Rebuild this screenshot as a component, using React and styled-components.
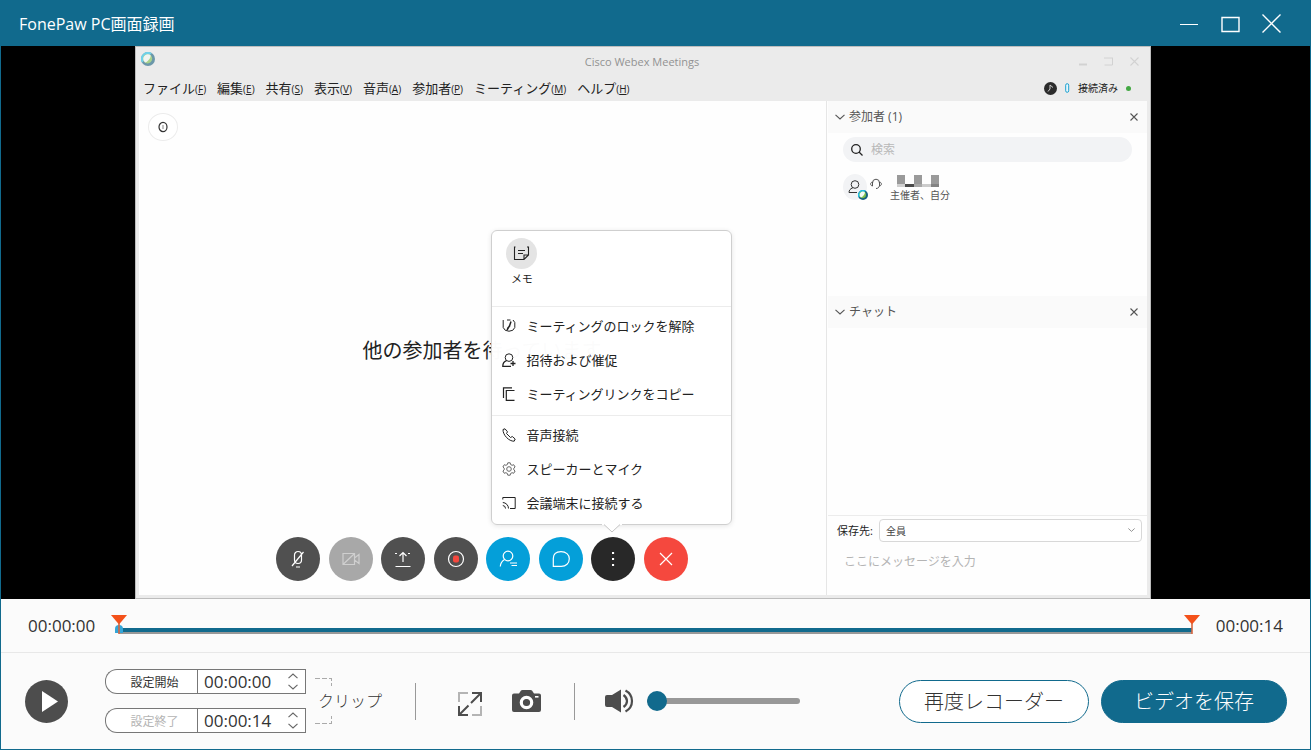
import { useState } from 'react'
import styled, { createGlobalStyle } from 'styled-components'

const menus = [
  ['ファイル', 'F'],
  ['編集', 'E'],
  ['共有', 'S'],
  ['表示', 'V'],
  ['音声', 'A'],
  ['参加者', 'P'],
  ['ミーティング', 'M'],
  ['ヘルプ', 'H'],
]

const mosaic = ['#9a9a9a', '#fefefe', '#9a9a9a', '#fefefe', '#9a9a9a', '#d0d0d0', '#4a4a4a', '#a8a8a8', '#cccccc', '#838383']

const WebexLogo = ({ size, faded }) => (
  <svg width={size} height={size} viewBox="0 0 14 14" opacity={faded ? 0.6 : 1} aria-hidden="true">
    <circle cx="7" cy="7" r="7" fill="#17607f" />
    <path d="M1 10.6A7 7 0 0 1 10.8 1.1L8 4 4 8Z" fill="#1fc0e8" />
    <circle cx="6.6" cy="6.8" r="4.6" fill="#7cc04b" />
    <path d="M2.6 8.6A4.6 4.6 0 0 1 9.6 3.2C10 6 7 9.6 4 10.6Z" fill="#f4fbf6" />
  </svg>
)

const Chevron = ({ width = 10 }) => (
  <svg width={width} height="6" viewBox="0 0 10 6" fill="none" stroke="currentColor" strokeWidth="1.1" aria-hidden="true">
    <path d="M.5 .8 5 5 9.500 .8" />
  </svg>
)

const Cross = ({ size = 8, stroke = 1.1 }) => (
  <svg width={size} height={size} fill="none" stroke="currentColor" strokeWidth={stroke} aria-hidden="true">
    <path d={`M.5 .5 ${size - 0.5} ${size - 0.5}M${size - 0.5} .5 .5 ${size - 0.5}`} />
  </svg>
)

const Line = ({ size = 20, children }) => (
  <svg width={size} height={size} viewBox="0 0 20 20" fill="none" stroke="currentColor" strokeWidth="1.2" aria-hidden="true">
    {children}
  </svg>
)

const Small = ({ children }) => (
  <svg width="14" height="14" viewBox="0 0 14 14" fill="none" stroke="#222" strokeWidth="1" aria-hidden="true">
    {children}
  </svg>
)

const callButtons = [
  { label: 'ミュート', color: '#505050', icon: <Line><path d="M6.500 6a3.500 3.500 0 0 1 7 0v5a3.500 3.500 0 0 1-7 0ZM15.500 3 4 17M8 18h4" /></Line> },
  { label: 'ビデオ', color: '#a8a8a8', line: '#cfcfcf', icon: <Line><path d="M2 4.500h11.500v11H2ZM13.500 9 18 5.500v9L13.500 11M2.500 15 13 5" /></Line> },
  { label: '共有', color: '#505050', icon: <Line><path d="M2.500 17.500h15M10 13V3.500M6.500 7 10 3.500 13.500 7" /><path d="M2 4.500h3M15 4.500h3" strokeDasharray="2 2" /></Line> },
  { label: '録画', color: '#505050', icon: <Line><circle cx="10" cy="10" r="7.500" /><rect x="7" y="6.500" width="6" height="7" rx="2" fill="#f5483e" stroke="none" /></Line> },
  { label: '参加者', color: '#049fd9', icon: <Line><circle cx="10" cy="7" r="4.800" /><path d="M6.500 10.500C4 12 2.500 14 2.300 17.500M12 14h7M13.500 16.500H19" /></Line> },
  { label: 'チャット', color: '#049fd9', icon: <Line><path d="M2.300 17.300V9.500C2.300 5 5.500 2.600 10 2.600c5 0 8.300 3 8.300 7.200 0 4.500-3.300 7.500-8 7.500Z" /></Line> },
  { label: 'その他', color: '#282828', menu: true, icon: <Line><path d="M10 4h.1M10 10h.1M10 16h.1" strokeWidth="2" strokeLinecap="square" /></Line> },
  { label: '退出', color: '#f5483e', icon: <Line><path d="M4 4 16 16M16 4 4 16" /></Line> },
]

const meetingItems = [
  ['ミーティングのロックを解除', <Small><path d="M1.200 1v7.500a6 5 0 0 0 11.600 0V3.500L11 1M5 1h3.500" /><path d="M9 2.500 7.500 7 5 11M5.500 9.500 8 6.500" strokeWidth="1.500" /></Small>],
  ['招待および催促', <Small><circle cx="7" cy="4.600" r="3.800" /><path d="M4.500 7.700C2 8.500.8 10.500.8 13.300H9M8.500 10.500h5M11 8v5" strokeWidth="1.300" /></Small>],
  ['ミーティングリンクをコピー', <Small><path d="M1.500 11V.8H10M12.500 3.500H4.300v9.900h8.200" strokeWidth="1.200" /></Small>],
]

const deviceItems = [
  ['音声接続', <Small><path d="M1 1.500 3 .8l2.500 3-1 1.700 4 4 1.800-1L13.200 11l-1 2.200C7 13.500.8 7 1 1.500Z" /></Small>],
  ['スピーカーとマイク', <Small><circle cx="7" cy="7" r="2.300" stroke="#666" /><path d="m5.800.8-.4 1.700-1.500.8L2.300 2.700.9 5l1.300 1.200v1.600L.9 9l1.400 2.300 1.600-.6 1.500.8.4 1.700h2.400l.4-1.700 1.500-.8 1.600.6L13.100 9l-1.300-1.200V6.200L13.100 5l-1.400-2.300-1.600.6-1.500-.8L8.200.8Z" stroke="#666" /></Small>],
  ['会議端末に接続する', <Small><path d="M.8 3.500V1.500h12.400v11H8M.8 6.500a6 6 0 0 1 5.700 6M.8 9.500a3 3 0 0 1 2.700 3" /></Small>],
]

const MoreMenu = () => (
  <Popup role="menu">
    <MemoSection>
      <Memo type="button">
        <MemoCircle>
          <svg width="17" height="17" viewBox="0 0 17 17" fill="none" stroke="#222" strokeWidth="1.100" aria-hidden="true">
            <path d="M2.500 2H1.500v12.500h9.500l4.500-4.500V2h-1.500M11 14.500V10h4.500M5 5.500h7M5 8.500h5" />
          </svg>
        </MemoCircle>
        メモ
      </Memo>
    </MemoSection>
    {[meetingItems, deviceItems].map((items, i) => (
      <MenuSection key={i}>
        {items.map(([text, icon]) => (
          <MenuItem key={text} type="button" role="menuitem">
            {icon}
            {text}
          </MenuItem>
        ))}
      </MenuSection>
    ))}
    <Arrow viewBox="0 0 20 9" aria-hidden="true">
      <path d="M0 0H20V1H17.500L10 8 2.500 1H0Z" fill="#fff" />
      <path d="M2 .5 10 8 18 .5" fill="none" stroke="#c4c4c4" />
    </Arrow>
  </Popup>
)

const TimeField = ({ label, value, onChange, disabled }) => (
  <ClipRow>
    <SetButton type="button" disabled={disabled}>{label}</SetButton>
    <SpinBox>
      <TimeInput aria-label={label} value={value} onChange={(e) => onChange(e.target.value)} />
      <Spinner>
        <SpinButton type="button" aria-label={`${label} +`} $up>
          <Chevron width={12} />
        </SpinButton>
        <SpinButton type="button" aria-label={`${label} -`}>
          <Chevron width={12} />
        </SpinButton>
      </Spinner>
    </SpinBox>
  </ClipRow>
)

const Marker = () => (
  <svg width="16" height="19" viewBox="0 0 16 19" aria-hidden="true">
    <path d="M0 0H16L8 9.500Z" fill="#f4511a" />
    <path d="M8 8V19" stroke="#d9663f" strokeWidth="1.600" />
  </svg>
)

const App = () => {
  const [start, setStart] = useState('00:00:00')
  const [end, setEnd] = useState('00:00:14')
  const [position, setPosition] = useState(0)
  const [volume, setVolume] = useState(0)

  return (
    <Window>
      <GlobalStyle />
      <TitleBar>
        <Title>FonePaw PC画面録画</Title>
        <WindowButtons>
          <PlainButton type="button" aria-label="最小化">
            <svg width="19" height="19" fill="none" stroke="#fff"><path d="M0 10.500H18" /></svg>
          </PlainButton>
          <PlainButton type="button" aria-label="最大化">
            <svg width="19" height="19" fill="none" stroke="#fff" strokeWidth="1.400"><path d="M1 3.500H18V17.500H1Z" /></svg>
          </PlainButton>
          <PlainButton type="button" aria-label="閉じる">
            <Cross size={19} stroke={1.4} />
          </PlainButton>
        </WindowButtons>
      </TitleBar>

      <Stage>
        <Meeting>
          <MeetingTitle>
            <WebexLogo size={14} faded />
            <MeetingName>Cisco Webex Meetings</MeetingName>
            <MeetingButtons>
              <svg width="9" height="9"><path d="M0 7.500H8" stroke="#d2d2d2" strokeWidth="2" /></svg>
              <svg width="10" height="9" fill="none" stroke="#d2d2d2"><path d="M0 1H9M8.500 1V8H.5" /></svg>
              <Cross size={9} />
            </MeetingButtons>
          </MeetingTitle>
          <MenuBar>
            {menus.map(([text, key]) => (
              <MenuEntry key={key} type="button">
                {text}
                <Accel>(<u>{key}</u>)</Accel>
              </MenuEntry>
            ))}
            <Connection>
              <svg width="13" height="13" viewBox="0 0 13 13" aria-hidden="true">
                <circle cx="6.500" cy="6.500" r="6.500" fill="#2b2b2b" />
                <path d="M4 9.500 6 7V3l3 2.500" fill="none" stroke="#ccc" />
              </svg>
              <svg width="5" height="10" viewBox="0 0 5 10" aria-hidden="true">
                <rect x=".7" y=".7" width="3" height="8.600" rx="1.500" fill="#e8f8fe" stroke="#1ba0cf" />
              </svg>
              接続済み
              <GreenDot />
            </Connection>
          </MenuBar>

          <MeetingBody>
            <Waiting>
              <InfoButton type="button" aria-label="情報">
                <svg width="10" height="12" fill="none" stroke="#333" strokeWidth="1.200"><ellipse cx="5" cy="6" rx="4" ry="4.600" /><path d="M5 4V8" strokeWidth=".6" /></svg>
              </InfoButton>
              <WaitingText>他の参加者を待っています</WaitingText>
              <CallBar>
                {callButtons.map((b) => (
                  <CallSlot key={b.label}>
                    <CallButton type="button" aria-label={b.label} $color={b.color} $line={b.line}>
                      {b.icon}
                    </CallButton>
                    {b.menu && <MoreMenu />}
                  </CallSlot>
                ))}
              </CallBar>
            </Waiting>

            <Side>
              <PanelHead>
                <Chevron />
                <PanelName>参加者 (1)</PanelName>
                <PlainButton type="button" aria-label="参加者を閉じる"><Cross /></PlainButton>
              </PanelHead>
              <Participants>
                <Search>
                  <svg width="12" height="12" fill="none" stroke="#222" strokeWidth="1.300" aria-hidden="true"><circle cx="5" cy="5" r="4.300" /><path d="M8 8 11.500 11.500" /></svg>
                  <SearchInput aria-label="検索" placeholder="検索" />
                </Search>
                <Person>
                  <Avatar>
                    <svg width="14" height="14" viewBox="0 0 14 14" fill="none" stroke="#333" aria-hidden="true"><circle cx="7" cy="4.500" r="3.800" /><path d="M4.800 7.800C2 8.800 1 10.500 1 12.500H9" /></svg>
                    <AvatarBadge><WebexLogo size={10} /></AvatarBadge>
                  </Avatar>
                  <svg width="12" height="12" viewBox="0 0 12 12" fill="none" stroke="#555" aria-hidden="true"><path d="M2.500 7.500V5a3.500 3.800 0 0 1 7 0v2.500c-.5 2-1.500 3-3.500 3" /><path d="M2.500 4C0 4.500 0 7.500 2.500 8ZM9.500 4C12 4.500 12 7.500 9.500 8Z" /></svg>
                  <PersonText>
                    <Mosaic>
                      {mosaic.map((c, i) => <Pixel key={i} $color={c} />)}
                    </Mosaic>
                    主催者、自分
                  </PersonText>
                </Person>
              </Participants>
              <PanelHead>
                <Chevron />
                <PanelName>チャット</PanelName>
                <PlainButton type="button" aria-label="チャットを閉じる"><Cross /></PlainButton>
              </PanelHead>
              <ChatLog />
              <ChatForm>
                <SendRow>
                  <label htmlFor="send-to">保存先:</label>
                  <SelectBox>
                    <SendSelect id="send-to"><option>全員</option></SendSelect>
                    <Chevron width={7} />
                  </SelectBox>
                </SendRow>
                <Message aria-label="メッセージ" rows="1" placeholder="ここにメッセージを入力" />
              </ChatForm>
            </Side>
          </MeetingBody>
        </Meeting>
      </Stage>

      <Timeline>
        <span>00:00:00</span>
        <Track>
          <Seek type="range" aria-label="再生位置" min="0" max="14" value={position} onChange={(e) => setPosition(e.target.value)} />
          <MarkerSlot><Marker /></MarkerSlot>
          <MarkerSlot $end><Marker /></MarkerSlot>
        </Track>
        <span>00:00:14</span>
      </Timeline>

      <Controls>
        <PlainButton type="button" aria-label="再生">
          <svg width="43" height="43" viewBox="0 0 43 43"><circle cx="21.500" cy="21.500" r="21.500" fill="#4d4d4d" /><path d="M17 11V32L33 21.500Z" fill="#fff" /></svg>
        </PlainButton>
        <ClipTimes>
          <TimeField label="設定開始" value={start} onChange={setStart} />
          <TimeField label="設定終了" value={end} onChange={setEnd} disabled />
        </ClipTimes>
        <Clip>
          <svg width="18" height="10" fill="none" stroke="#aaa"><path d="M0 1.500H17" strokeDasharray="5 2" /><path d="M16.500 1V10" strokeDasharray="3 2" /></svg>
          <span>クリップ</span>
          <svg width="18" height="10" fill="none" stroke="#aaa"><path d="M0 8.500H17" strokeDasharray="5 2" /><path d="M16.500 9V0" strokeDasharray="3 2" /></svg>
        </Clip>
        <Divider />
        <Tools>
          <PlainButton type="button" aria-label="全画面">
            <svg width="24" height="30" viewBox="0 -6 24 30" fill="none" strokeWidth="2">
              <path d="M1 10V1H10M23 14V23H14" stroke="#b4b4b4" />
              <path d="M14 1H23V10M1 14V23H10M22.500 1.500 13 11M1.500 22.500 10.500 13.500" stroke="#4d4d4d" />
            </svg>
          </PlainButton>
          <PlainButton type="button" aria-label="スナップショット">
            <svg width="29" height="24" viewBox="0 0 29 24">
              <path d="M2 4.500H7L9 1.500Q9.500 1 10.500 1H18.500Q19.500 1 20 1.500L22 4.500H27Q29 4.500 29 6.500V21Q29 23 27 23H2Q0 23 0 21V6.500Q0 4.500 2 4.500Z" fill="#4d4d4d" />
              <circle cx="14.500" cy="13.500" r="5.200" fill="#4d4d4d" stroke="#fff" strokeWidth="3.200" />
              <circle cx="14.500" cy="13.500" r="3" fill="#4d4d4d" />
              <path d="M23 7.800H26.500" stroke="#fff" strokeWidth="1.600" />
            </svg>
          </PlainButton>
        </Tools>
        <Divider />
        <Sound>
          <PlainButton type="button" aria-label="消音">
            <svg width="29" height="24" viewBox="0 0 29 24" fill="none" stroke="#4d4d4d" strokeWidth="2.200">
              <path d="M2 6H7L16 .5V23.500L7 18H2Q0 18 0 16V8Q0 6 2 6Z" fill="#4d4d4d" stroke="none" />
              <path d="M18.500 6Q22 8.500 22 12T18.500 18M20.500 1.500Q27 5 27 12T20.500 22.500" />
            </svg>
          </PlainButton>
          <Volume type="range" aria-label="音量" value={volume} onChange={(e) => setVolume(e.target.value)} />
        </Sound>
        <Actions>
          <ActionButton type="button">再度レコーダー</ActionButton>
          <ActionButton type="button" $primary>ビデオを保存</ActionButton>
        </Actions>
      </Controls>
    </Window>
  )
}

const GlobalStyle = createGlobalStyle`
  * { box-sizing: border-box; }
  body { margin: 0; }
  body, button, input, select, textarea {
    font-family: "Open Sans", "Noto Sans CJK JP", sans-serif;
  }
  button { cursor: pointer; }
  svg { display: block; flex-shrink: 0; }
`
const Window = styled.div`
  display: flex;
  flex-direction: column;
  min-height: 100vh;
  border: 1px solid #116a8d;
  border-top: none;
  background: #fbfbfb;
  color: #333;
`
const TitleBar = styled.header`
  display: flex;
  justify-content: space-between;
  align-items: center;
  height: 46px;
  padding: 0 29px 0 18px;
  background: #116a8d;
  color: #fff;
`
const Title = styled.h1`
  margin: 0;
  padding-top: 2px;
  font-size: 16px;
  font-weight: 400;
  line-height: 24px;
`
const WindowButtons = styled.div`
  display: flex;
  gap: 22px;
`
const PlainButton = styled.button`
  display: block;
  padding: 0;
  border: none;
  background: none;
  color: inherit;
`
const Stage = styled.main`
  display: flex;
  flex: 1;
  padding: 0 159px 0 134px;
  background: #000;
`
const Meeting = styled.section`
  display: flex;
  flex-direction: column;
  flex: 1;
  border: 1px solid #bdbdbd;
  background: #ebebeb;
  padding: 0 3px 3px;
`
const MeetingTitle = styled.div`
  display: flex;
  justify-content: space-between;
  align-items: center;
  height: 28px;
  padding: 0 8px 4px 2px;
`
const MeetingName = styled.span`
  padding: 6px 0 0 50px;
  font-size: 11px;
  line-height: 16px;
  color: #929292;
`
const MeetingButtons = styled.div`
  display: flex;
  gap: 16px;
  padding-top: 4px;
  color: #d2d2d2;
`
const MenuBar = styled.nav`
  display: flex;
  align-items: center;
  gap: 11px;
  height: 26px;
  padding: 0 16px 0 4px;
`
const MenuEntry = styled.button`
  padding: 0;
  border: none;
  background: none;
  font-size: 13px;
  line-height: 20px;
  white-space: nowrap;
  color: #222;
`
const Accel = styled.span`
  font-size: 10px;
`
const Connection = styled.div`
  display: flex;
  align-items: center;
  gap: 8px;
  margin-left: auto;
  font-size: 10px;
  line-height: 16px;
  white-space: nowrap;
  color: #222;
`
const GreenDot = styled.i`
  width: 5px;
  height: 5px;
  border-radius: 50%;
  background: #43a843;
`
const MeetingBody = styled.div`
  display: flex;
  flex: 1;
  background: #fefefe;
`
const Waiting = styled.div`
  display: flex;
  flex-direction: column;
  flex: 1;
  padding: 12px 10px 14px 9px;
`
const InfoButton = styled.button`
  display: flex;
  justify-content: center;
  align-items: center;
  width: 30px;
  height: 28px;
  padding: 0;
  border: 1px solid #ececec;
  border-radius: 50%;
  background: #fff;
`
const WaitingText = styled.p`
  display: flex;
  flex: 1;
  justify-content: center;
  align-items: center;
  margin: 0;
  padding-top: 24px;
  font-size: 20px;
  line-height: 28px;
  color: #222;
`
const CallBar = styled.div`
  display: flex;
  align-self: center;
  justify-content: space-between;
  width: 412px;
`
const CallSlot = styled.div`
  position: relative;
`
const CallButton = styled.button`
  display: flex;
  justify-content: center;
  align-items: center;
  width: 44px;
  height: 44px;
  padding: 0;
  border: none;
  border-radius: 50%;
  background: ${(p) => p.$color};
  color: ${(p) => p.$line || '#fff'};
`
const Popup = styled.div`
  position: absolute;
  bottom: calc(100% + 12px);
  left: -100px;
  width: 241px;
  border: 1px solid #cfcfcf;
  border-radius: 6px;
  background: rgba(255, 255, 255, 0.985);
  box-shadow: 0 1px 5px rgba(0, 0, 0, 0.1);
`
const MemoSection = styled.div`
  display: flex;
  height: 75px;
  padding: 7px 14px;
`
const Memo = styled.button`
  display: flex;
  flex-direction: column;
  align-items: center;
  gap: 2px;
  padding: 0;
  border: none;
  background: none;
  font-size: 11px;
  line-height: 16px;
  color: #222;
`
const MemoCircle = styled.span`
  display: flex;
  justify-content: center;
  align-items: center;
  width: 31px;
  height: 31px;
  border-radius: 50%;
  background: #e4e4e4;
`
const MenuSection = styled.div`
  padding: 2px 0 4px;
  border-top: 1px solid #ececec;
`
const MenuItem = styled.button`
  display: flex;
  align-items: center;
  gap: 10px;
  width: 100%;
  height: 34px;
  padding: 0 10px;
  border: none;
  background: none;
  font-size: 13px;
  line-height: 20px;
  white-space: nowrap;
  color: #222;
`
const Arrow = styled.svg`
  position: absolute;
  top: 100%;
  left: 110px;
  width: 20px;
  height: 9px;
`
const Side = styled.aside`
  display: flex;
  flex-direction: column;
  width: 321px;
  padding-left: 1px;
  border-left: 1px solid #e6e6e6;
`
const PanelHead = styled.div`
  display: flex;
  align-items: center;
  gap: 4px;
  height: 32px;
  padding: 0 9px 0 7px;
  background: #fafafa;
  color: #555;
`
const PanelName = styled.h2`
  flex: 1;
  margin: 0;
  font-size: 12px;
  font-weight: 400;
  line-height: 16px;
`
const Participants = styled.div`
  height: 163px;
  padding: 4px 15px;
`
const Search = styled.div`
  display: flex;
  align-items: center;
  gap: 8px;
  height: 25px;
  padding: 0 8px;
  border-radius: 13px;
  background: #f2f3f5;
`
const SearchInput = styled.input`
  flex: 1;
  min-width: 0;
  padding: 0;
  border: none;
  outline: none;
  background: none;
  font-size: 12px;
  line-height: 16px;
  &::placeholder {
    color: #b8b8b8;
  }
`
const Person = styled.div`
  display: flex;
  gap: 3px;
  padding-top: 12px;
  > svg {
    margin-top: 4px;
  }
`
const Avatar = styled.div`
  position: relative;
  display: flex;
  justify-content: center;
  align-items: center;
  width: 24px;
  height: 26px;
  border-radius: 50%;
  background: #f2f3f5;
`
const AvatarBadge = styled.span`
  position: absolute;
  right: -1px;
  bottom: 0;
`
const PersonText = styled.div`
  padding-left: 5px;
  font-size: 10px;
  line-height: 16px;
  color: #555;
`
const Mosaic = styled.div`
  display: grid;
  grid-template-columns: 8px 9px 8px 9px 8px;
  grid-template-rows: 9px 3px;
  padding: 1px 0 0 7px;
`
const Pixel = styled.i`
  background: ${(p) => p.$color};
`
const ChatLog = styled.div`
  flex: 1;
`
const ChatForm = styled.form`
  height: 80px;
  padding: 3px 5px 0 9px;
  border-top: 1px solid #ececec;
`
const SendRow = styled.div`
  display: flex;
  align-items: center;
  gap: 6px;
  font-size: 11px;
  line-height: 16px;
  white-space: nowrap;
  color: #222;
`
const SelectBox = styled.div`
  position: relative;
  flex: 1;
  color: #777;
  svg {
    position: absolute;
    top: 8px;
    right: 7px;
  }
`
const SendSelect = styled.select`
  display: block;
  width: 100%;
  height: 23px;
  padding: 0 6px;
  border: 1px solid #d8d8d8;
  border-radius: 4px;
  appearance: none;
  background: #fff;
  font-size: 10px;
  color: #444;
`
const Message = styled.textarea`
  display: block;
  width: 100%;
  margin-top: 11px;
  padding: 0 7px;
  border: none;
  outline: none;
  resize: none;
  background: none;
  font-size: 12px;
  line-height: 18px;
  &::placeholder {
    color: #b4b4b4;
  }
`
const Timeline = styled.div`
  display: flex;
  align-items: center;
  gap: 24px;
  height: 54px;
  padding: 0 27px;
  border-bottom: 1px solid #e8e8e8;
  font-size: 17px;
  line-height: 24px;
`
const Track = styled.div`
  position: relative;
  flex: 1;
  height: 6px;
  margin-top: 10px;
  border-bottom: 2px solid #989898;
  background: #116a8d;
`
const Seek = styled.input`
  position: absolute;
  top: -3px;
  left: -4px;
  width: calc(100% + 8px);
  height: 8px;
  margin: 0;
  appearance: none;
  background: none;
  &::-webkit-slider-thumb {
    appearance: none;
    width: 8px;
    height: 8px;
    border-radius: 4px 4px 0 0;
    background: #35a6d8;
  }
`
const MarkerSlot = styled.span`
  position: absolute;
  bottom: -2px;
  ${(p) => (p.$end ? 'right: -8px;' : 'left: -8px;')}
  pointer-events: none;
`
const Controls = styled.footer`
  display: flex;
  align-items: center;
  height: 96px;
  padding: 0 23px 0 24px;
`
const ClipTimes = styled.div`
  display: flex;
  flex-direction: column;
  gap: 14px;
  margin-left: 37px;
`
const ClipRow = styled.div`
  display: flex;
  height: 25px;
`
const SetButton = styled.button`
  width: 92px;
  padding: 2px 0 0 6px;
  border: 1px solid #777;
  border-right: none;
  border-radius: 12px 0 0 12px;
  background: #fff;
  font-size: 12px;
  line-height: 20px;
  color: #333;
  &:disabled {
    color: #b4b4b4;
  }
`
const SpinBox = styled.div`
  display: flex;
  align-items: center;
  justify-content: space-between;
  width: 109px;
  padding: 0 6px;
  border: 1px solid #777;
  background: #fff;
`
const TimeInput = styled.input`
  width: 76px;
  padding: 0;
  border: none;
  outline: none;
  background: none;
  font-size: 17px;
  line-height: 22px;
  color: #333;
`
const Spinner = styled.div`
  display: flex;
  flex-direction: column;
  gap: 5px;
  color: #666;
`
const SpinButton = styled(PlainButton)`
  transform: ${(p) => (p.$up ? 'rotate(180deg)' : 'none')};
`
const Clip = styled.div`
  display: flex;
  flex-direction: column;
  gap: 2px;
  margin-left: 9px;
  font-size: 16px;
  font-weight: 300;
  line-height: 24px;
  span {
    padding-left: 3px;
  }
`
const Divider = styled.i`
  width: 1px;
  height: 37px;
  background: #999;
  margin-left: 33px;
`
const Tools = styled.div`
  display: flex;
  align-items: center;
  gap: 30px;
  margin-left: 42px;
`
const Sound = styled.div`
  display: flex;
  align-items: center;
  gap: 13px;
  margin-left: 30px;
`
const Volume = styled.input`
  width: 153px;
  height: 20px;
  margin: 0;
  appearance: none;
  background: none;
  &::-webkit-slider-runnable-track {
    height: 6px;
    border-radius: 3px;
    background: #989898;
  }
  &::-webkit-slider-thumb {
    appearance: none;
    width: 20px;
    height: 20px;
    margin-top: -7px;
    border-radius: 50%;
    background: #116a8d;
  }
`
const Actions = styled.div`
  display: flex;
  gap: 12px;
  margin-left: auto;
`
const ActionButton = styled.button`
  height: 43px;
  padding: 2px ${(p) => (p.$primary ? 32 : 24)}px 0;
  border: 1px solid #116a8d;
  border-radius: 22px;
  background: ${(p) => (p.$primary ? '#116a8d' : '#fff')};
  font-size: 20px;
  font-weight: 300;
  line-height: 28px;
  white-space: nowrap;
  color: ${(p) => (p.$primary ? '#fff' : '#333')};
`

export default App
